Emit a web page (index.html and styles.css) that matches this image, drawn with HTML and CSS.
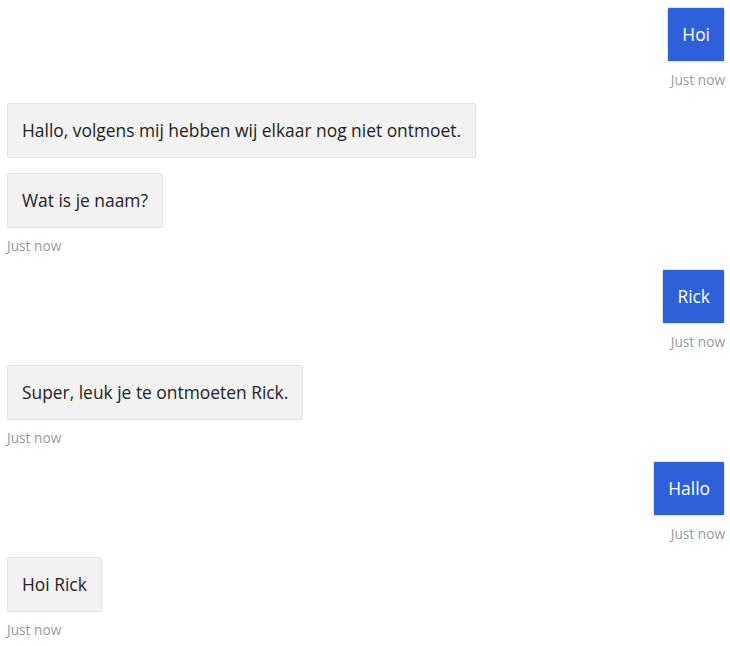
FILE: index.html
```html
<!DOCTYPE html>
<html lang="nl">
<head>
<meta charset="utf-8">
<title>Chat</title>
<link rel="stylesheet" href="styles.css">
</head>
<body>
<div class="chat">
  <div class="group user">
    <div class="bubble">Hoi</div>
    <div class="stamp">Just now</div>
  </div>
  <div class="group bot">
    <div class="bubble">Hallo, volgens mij hebben wij elkaar nog niet ontmoet.</div>
    <div class="bubble">Wat is je naam?</div>
    <div class="stamp">Just now</div>
  </div>
  <div class="group user">
    <div class="bubble">Rick</div>
    <div class="stamp">Just now</div>
  </div>
  <div class="group bot">
    <div class="bubble">Super, leuk je te ontmoeten Rick.</div>
    <div class="stamp">Just now</div>
  </div>
  <div class="group user">
    <div class="bubble">Hallo</div>
    <div class="stamp">Just now</div>
  </div>
  <div class="group bot">
    <div class="bubble">Hoi Rick</div>
    <div class="stamp">Just now</div>
  </div>
</div>
</body>
</html>
```
FILE: styles.css
```css
html, body {
  margin: 0;
  padding: 0;
  background: #ffffff;
}

body {
  font-family: "Segoe UI", "Open Sans", "Noto Sans", sans-serif;
}

.chat {
  display: flex;
  flex-direction: column;
  gap: 13px;
  padding: 7px 5px 0 7px;
}

.group {
  display: flex;
  flex-direction: column;
  gap: 15px;
}

.group.user {
  align-items: flex-end;
}

.group.bot {
  align-items: flex-start;
}

.bubble {
  border: 1px solid #e3e3e3;
  border-radius: 2px;
  padding: 14px 14px;
  font-size: 17.4px;
  line-height: 25px;
  color: #222222;
  background: #f2f2f2;
}

.user .bubble {
  background: #2e60d9;
  color: #ffffff;
  border-color: #e3e3e3;
}

.stamp {
  margin-top: -7px;
  font-size: 13.7px;
  line-height: 20px;
  color: #999999;
}
```
